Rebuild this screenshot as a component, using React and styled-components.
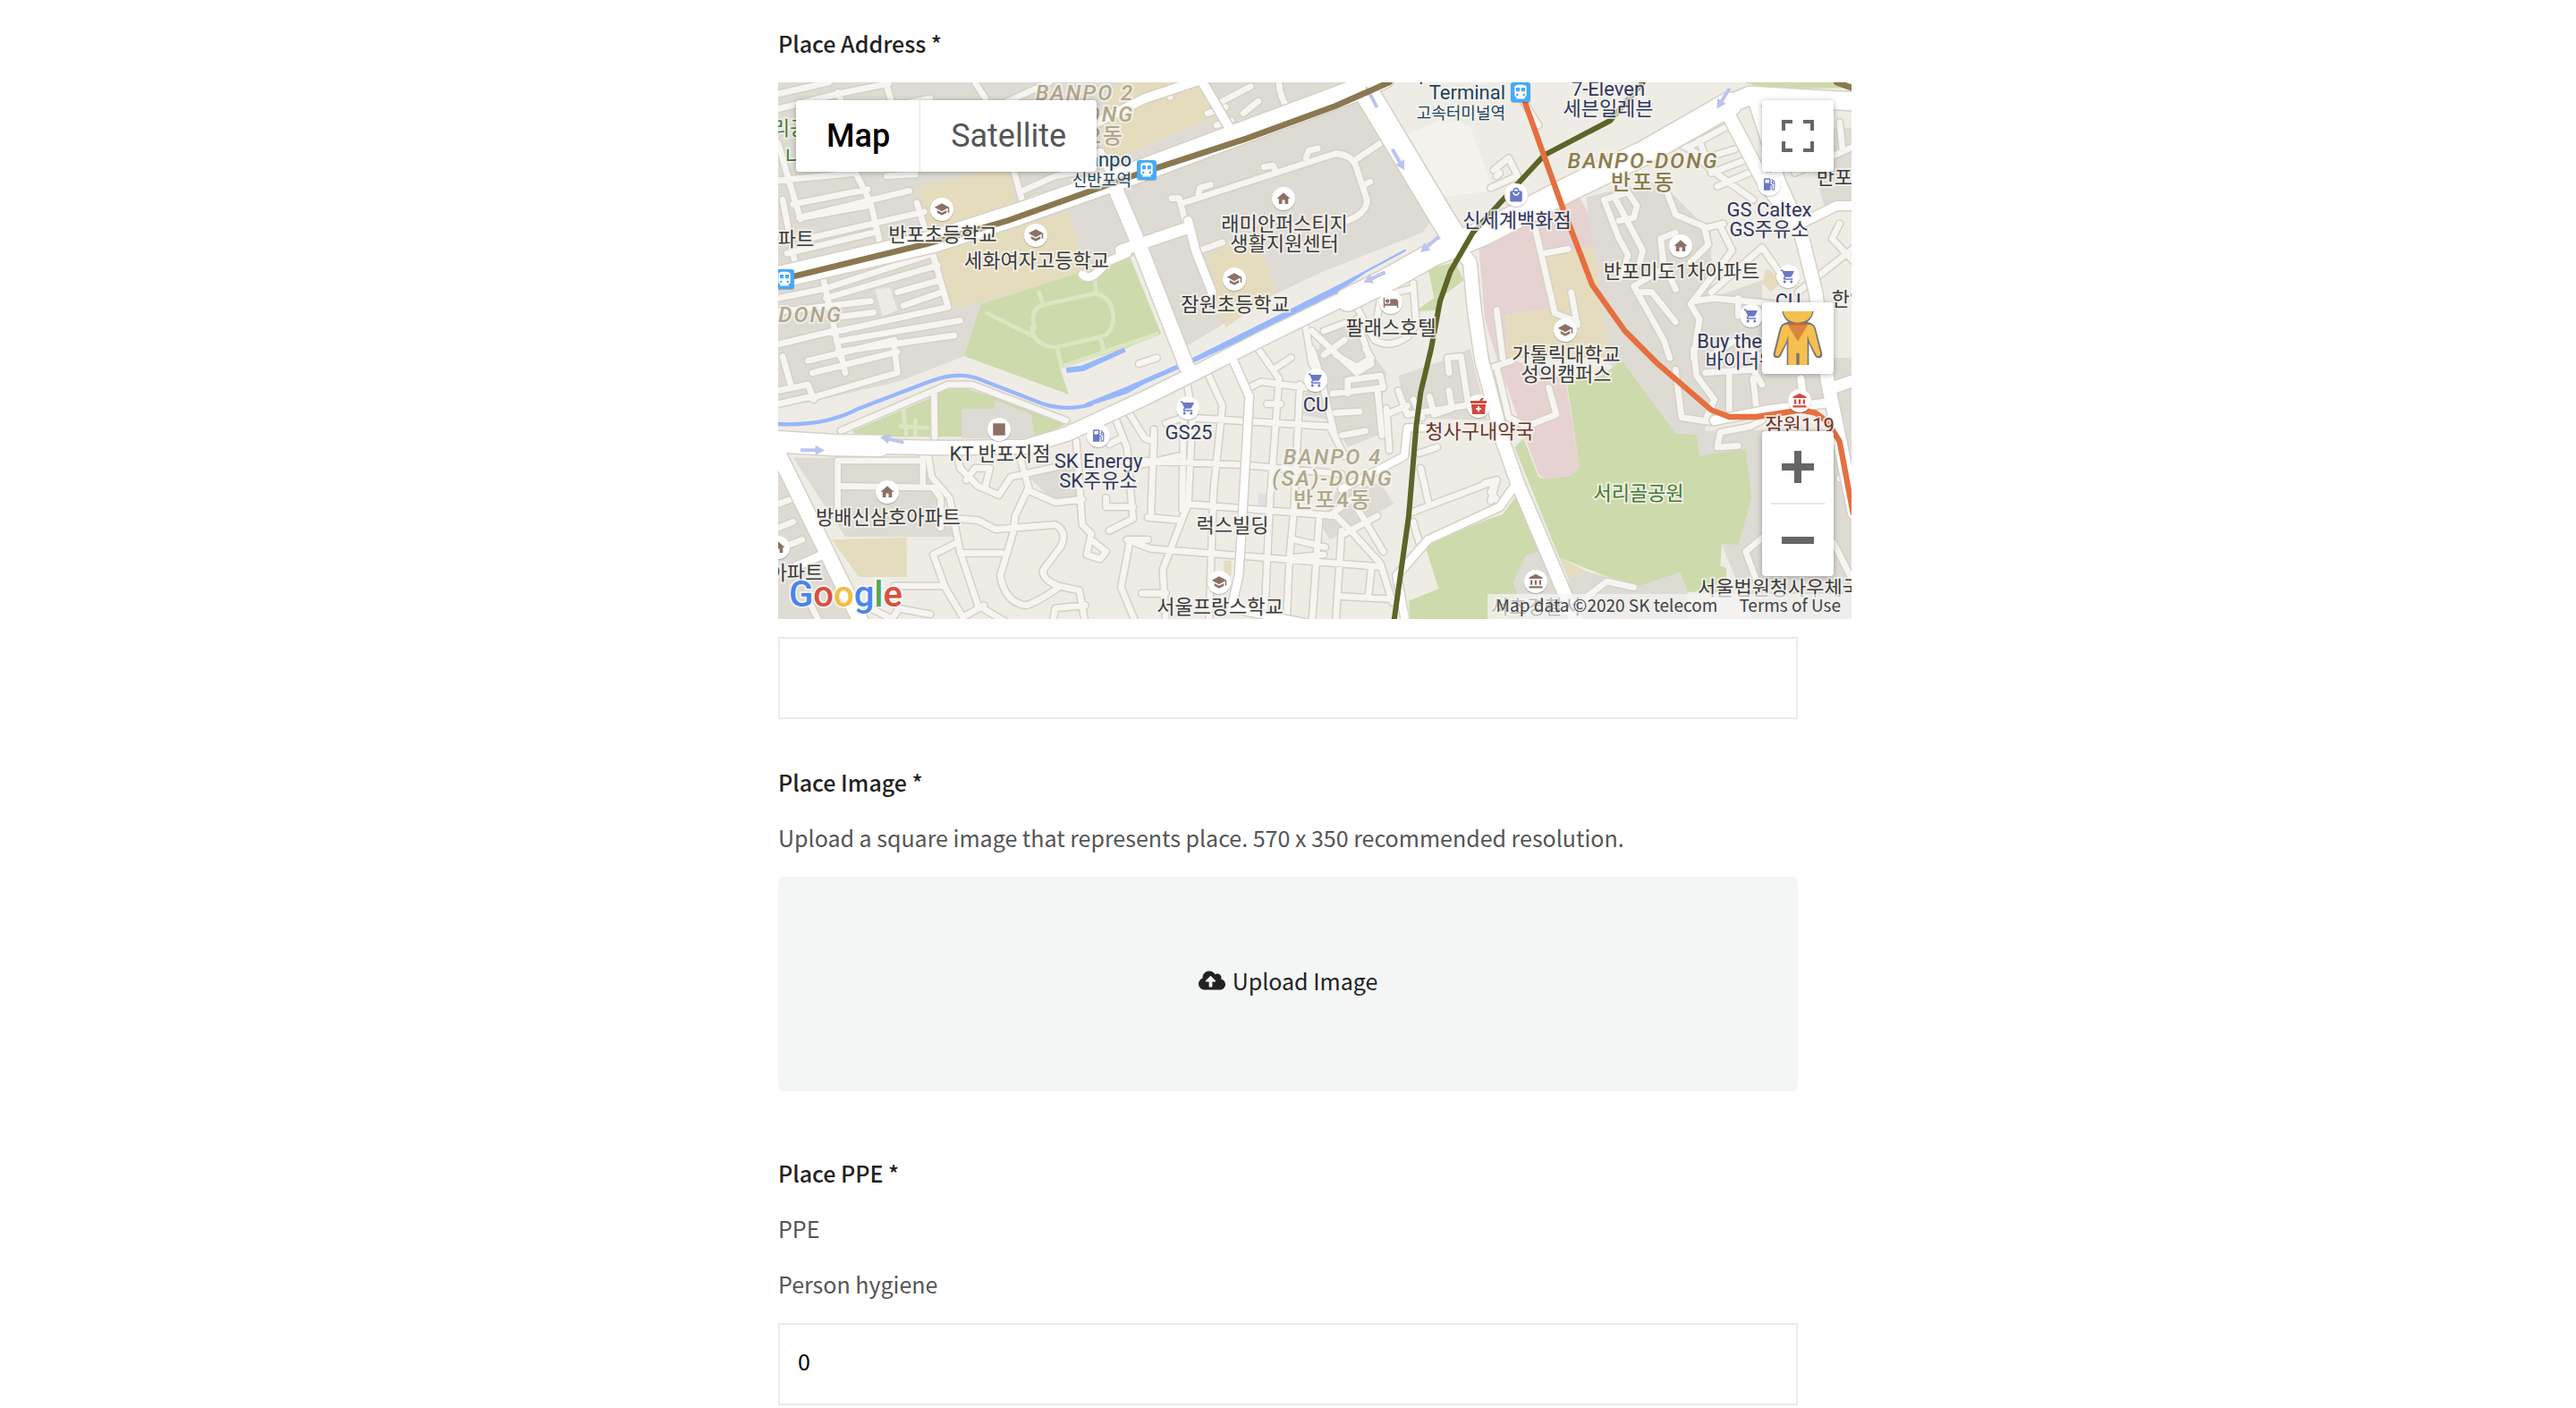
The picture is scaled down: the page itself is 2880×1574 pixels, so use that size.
import React, { useState } from "react";
import styled, { createGlobalStyle } from "styled-components";
import { FaCloudUploadAlt } from "react-icons/fa";
import {
  MdAccountBalance,
  MdDirectionsTransit,
  MdHome,
  MdHotel,
  MdLocalGasStation,
  MdLocalMall,
  MdSchool,
  MdShoppingCart,
  MdSquare,
} from "react-icons/md";

const GlobalStyle = createGlobalStyle`
  * {
    box-sizing: border-box;
  }

  body {
    margin: 0;
    background: #ffffff;
    color: #222222;
    font-family: "Noto Sans CJK KR", "Noto Sans", sans-serif;
  }
`;

const Form = styled.form`
  max-width: 1140px;
  margin: 0 auto;
  padding-top: 30px;
`;

const Field = styled.div`
  display: flex;
  flex-direction: column;
  margin-bottom: ${(props) => props.$gap || 52}px;
`;

const Label = styled.label`
  margin-bottom: 26px;
  font-size: 25px;
  font-weight: 500;
  line-height: 36px;
`;

const Description = styled.p`
  margin: 0 0 26px;
  color: #555555;
  font-size: 25px;
  line-height: 36px;
`;

const TextInput = styled.input`
  width: 100%;
  height: 92px;
  padding: 0 20px 8px;
  border: 2px solid #ebebeb;
  background: #ffffff;
  color: #000000;
  font-family: inherit;
  font-size: 25px;
`;

const UploadButton = styled.button`
  display: flex;
  align-items: center;
  justify-content: center;
  gap: 8px;
  width: 100%;
  height: 240px;
  padding: 0 0 8px;
  border: none;
  border-radius: 6px;
  background: #f4f6f6;
  color: #222222;
  font-family: inherit;
  font-size: 25px;
  cursor: pointer;

  svg {
    width: 30px;
    height: 24px;
  }
`;

const MapFrame = styled.div`
  position: relative;
  width: calc(100% + 60px);
  height: 600px;
  margin-bottom: 20px;
  overflow: hidden;
  background: #efece6;
  font-family: Roboto, "Noto Sans CJK KR", sans-serif;
`;

const MapDrawing = styled.svg`
  display: block;
  width: 100%;
  height: 100%;
  fill: none;
  stroke-linejoin: round;
  stroke-linecap: round;
`;

const Marker = styled.span`
  position: absolute;
  left: ${(props) => props.$x}px;
  top: ${(props) => props.$y}px;
  display: flex;
  align-items: center;
  justify-content: center;
  width: 26px;
  height: 26px;
  border-radius: 50%;
  background: #ffffff;
  box-shadow: 0 1px 1px rgba(0, 0, 0, 0.25);
  color: ${(props) => props.$color};
  font-size: 18px;
  transform: translate(-50%, -50%);
`;

const StationMarker = styled(Marker)`
  width: 22px;
  height: 22px;
  border-radius: 3px;
  background: #46aaf8;
  color: #ffffff;
  font-size: 20px;
`;

const PlaceName = styled.span`
  position: absolute;
  left: ${(props) => props.$x}px;
  top: ${(props) => props.$y}px;
  color: ${(props) => props.$color};
  font-size: 22px;
  line-height: 22px;
  text-align: center;
  white-space: pre;
  transform: translate(-50%, -50%);
  -webkit-text-stroke: 4px rgba(245, 243, 238, 0.8);
  paint-order: stroke fill;
`;

const DistrictName = styled(PlaceName)`
  font-size: 24px;
  font-weight: 500;
  line-height: 24px;
  letter-spacing: 2px;

  em {
    font-style: italic;
  }
`;

const StationName = styled(PlaceName)`
  text-align: right;
  transform: translate(-100%, -50%);

  small {
    font-size: 18px;
  }
`;

const MapTypes = styled.div`
  position: absolute;
  left: 20px;
  top: 20px;
  display: flex;
  border-radius: 4px;
  box-shadow: 0 1px 6px rgba(0, 0, 0, 0.3);
`;

const MapTypeButton = styled.button`
  height: 80px;
  padding: 0 34px;
  border: none;
  border-radius: ${(props) => (props.$divided ? "0 4px 4px 0" : "4px 0 0 4px")};
  background: #ffffff;
  box-shadow: ${(props) => (props.$divided ? "-1px 0 2px rgba(0, 0, 0, 0.12)" : "none")};
  color: ${(props) => (props.$active ? "#000000" : "#565656")};
  font-family: Roboto, sans-serif;
  font-size: 36px;
  font-weight: ${(props) => (props.$active ? 500 : 400)};
  cursor: pointer;
`;

const MapControls = styled.div`
  position: absolute;
  right: 20px;
  top: ${(props) => props.$top}px;
  display: flex;
  flex-direction: column;
  align-items: center;
  width: 80px;
  border-radius: 4px;
  background: #ffffff;
  box-shadow: 0 1px 6px rgba(0, 0, 0, 0.3);
`;

const ControlButton = styled.button`
  display: flex;
  align-items: center;
  justify-content: center;
  width: 80px;
  height: 80px;
  padding: 0;
  border: none;
  background: none;
  cursor: pointer;
`;

const ControlDivider = styled.div`
  width: 60px;
  height: 2px;
  background: #e6e6e6;
`;

const Logo = styled.a`
  position: absolute;
  left: 12px;
  bottom: 4px;
  font-size: 40px;
  font-weight: 500;
  line-height: 46px;
  text-decoration: none;
  -webkit-text-stroke: 4px rgba(255, 255, 255, 0.7);
  paint-order: stroke fill;
`;

const LogoLetter = styled.span`
  color: ${(props) => props.$color};
`;

const Attribution = styled.div`
  position: absolute;
  right: 0;
  bottom: 0;
  display: flex;
  gap: 24px;
  height: 28px;
  padding: 0 12px 0 10px;
  background: rgba(245, 245, 245, 0.7);
  color: #444444;
  font-family: "Noto Sans CJK KR", sans-serif;
  font-size: 19px;
  line-height: 24px;

  a {
    color: inherit;
    text-decoration: none;
  }
`;

const BLOCK = "#dedbd4";
const SAND = "#e5dcbe";
const GREEN = "#cddaab";
const PINK = "#e6d3d1";
const BROWN = "#8d7166";
const BLUE = "#6b78c4";
const NAVY = "#2f3560";
const DARK = "#3a3a3a";
const RED = "#cf4a3f";
const MAROON = "#6e332c";
const PARK_TEXT = "#3f7a30";
const DISTRICT = "#b0a78a";

// The map is stored as six tiles, each with its own origin
const tiles = [
  {
    x: -30,
    y: -36,
    areas: [
      [BLOCK, "M30 36H1300V610L1180 625L1070 690L655 955L430 1040L130 1110L30 1120Z"],
      [SAND, "M500 385L800 320L825 450L530 530Z"],
      [SAND, "M555 600L1005 470L1060 680L605 800Z"],
      [GREEN, "M710 780L1210 622L1315 880L1190 930L975 995L1005 1083L655 955Z"],
      ["#efece6", "M355 730L405 725L430 800L380 820Z"],
    ],
    paths: "M890 860Q870 790 930 780L1090 745Q1150 750 1155 830Q1150 880 1110 890L960 925Q890 920 880 860ZM730 810L880 885M905 740L920 785M1092 700L1097 745M1110 890L1120 930M965 925L980 990L1300 880",
    minor:
      "M30 75L200 36M30 125L230 75L400 40M390 36L410 100M230 70L245 110M690 36L725 90M790 105L940 36M540 90L440 110M30 240L60 345L105 495M45 430L90 660M100 490L470 400M290 340L340 440L375 590M30 365L290 340M80 445L330 395M110 490L330 450M130 560L370 505L520 470M495 440L545 600M60 610L350 540M395 350L490 345M180 690L240 960M30 760L180 730L550 610M545 600L600 790M190 760L565 650M430 740L570 700M450 785L580 740M30 805L340 770M215 825L350 808M210 875L600 790M30 915L215 870M225 905L640 835M230 940L620 885M45 955L75 1060M30 1070L130 1050L150 1100M240 945L255 1010M420 930L430 1010L140 1095M130 970L420 900M145 1010L430 940M30 1115L140 1090M820 330L850 440L900 420M850 400L960 350L1080 330",
    major: [
      [26, "M1050 680Q1080 710 1130 640L1200 610"],
      [72, "M30 690L550 570L830 480L1240 335L1950 70L2060 20"],
      [30, "M1100 170L1260 90L1440 30"],
      [26, "M1110 270L1140 330"],
    ],
  },
  {
    x: 1170,
    y: -36,
    areas: [
      [BLOCK, "M0 36H800L860 100L1030 490L990 540L660 670L490 750L200 920L60 700L0 500Z"],
      [SAND, "M-30 36H245L300 150L0 275L-70 290L-100 170Z"],
      [SAND, "M270 610L440 550L495 740L330 860Z"],
      [GREEN, "M1010 660L1100 640L1130 700L1050 760L1040 800L965 805L1030 760Z"],
      ["#f4f2ed", "M940 210L1060 160L1150 180L1230 400L1060 420Z"],
      [BLOCK, "M650 860L720 840L790 900L870 1010L640 1000Z"],
    ],
    minor:
      "M190 440L700 275Q750 280 765 310L805 430Q805 475 740 500M150 425L175 425L200 520M240 410L245 390L280 380M500 340L490 315L460 320M600 290L610 265L640 258M760 300L850 240M795 380L815 370M230 605L320 573M510 36Q510 80 540 125M300 110L415 50M390 140L440 100M300 180L350 165M270 140L330 120M130 60L145 85M770 790L830 900Q880 930 940 890L970 850L960 710M660 870L740 840M840 820L850 760L900 740L950 730M40 1320L170 1290M1250 340L1240 350M600 860L620 980L640 1010M620 870L770 1010L820 980L770 830M660 950L730 900",
    major: [
      [30, "M250 30L350 200"],
      [48, "M-40 390L40 580L200 990L220 1010"],
      [38, "M-20 600L200 525"],
      [28, "M205 500L230 600L285 740"],
      [70, "M-1190 1240L-980 1253L-830 1255"],
      [46, "M-830 1258L-600 1262L-340 1258L-200 1215L60 1095L240 1005L460 892L705 772"],
      [76, "M740 765L860 706L1030 611L1110 580"],
      [80, "M1080 590L1200 540L1490 390L1740 270L2020 110"],
      [60, "M2020 110L2090 80L2430 100"],
      [80, "M810 80L1050 480L1100 560"],
      [44, "M1080 550L1150 640L1165 800L1190 970L1215 1060L1260 1240L1310 1380L1510 1850"],
      [26, "M1310 1375L1250 1460L1010 1570L905 1690L935 1850"],
    ],
  },
  {
    x: 2370,
    y: -36,
    areas: [
      [BLOCK, "M340 420L560 370L640 420L760 540L760 760L930 700L930 960L1230 960V1840H900L640 1215L400 960Z"],
      [BLOCK, "M1070 190H1240V460H1140Z"],
      [PINK, "M-20 590L310 410L345 470L365 585L205 625L235 795L70 815L75 960L270 1030L318 1330L290 1355L200 1367L180 1350L100 1130L30 930L0 830Z"],
      [SAND, "M205 625L365 585L420 960L75 960L70 815L235 795Z"],
      [GREEN, "M870 36H1170L1240 55L950 58Z"],
      [SAND, "M930 710L945 660L1000 700L960 740Z"],
    ],
    minor:
      "M400 430L480 405L510 450L500 490L450 500M400 430L450 560L480 615L460 690M440 430L530 600L520 640M610 400L640 480L735 520L750 580L690 640M740 525L800 510M590 560L600 660L500 720L600 900L620 960M640 730L600 640L590 560L640 540M510 740L560 740L640 840M700 770L770 760L980 780M790 520L830 600L690 780L720 830L700 960M760 740L930 590L1000 690M1240 590L1050 740M1190 510L1165 560L1240 640M680 250L760 330L900 430M690 250L820 180M740 290L840 260M760 340L865 300M780 385L885 340M170 530L235 810L310 840M200 610L280 595M290 740L310 850M40 800L60 960M650 240L740 290L720 230M1040 340L1240 250M1190 170L1200 260M30 330L80 290L110 350L20 390M180 180L130 100M750 960L840 900L930 960M850 760L850 820",
    major: [
      [44, "M820 150L930 360L1060 540L1110 740L1150 1040L1240 1480"],
      [36, "M900 90L990 370L1050 500"],
      [30, "M1240 450L1180 450L1060 510"],
    ],
  },
  {
    x: -30,
    y: 894,
    areas: [
      [BLOCK, "M80 365H540L620 630H255Z"],
      [BLOCK, "M30 400L290 906H30Z"],
      [GREEN, "M280 275L540 165L570 140L650 130L1015 245L900 295H290Z"],
      [BLOCK, "M645 200H755V170L880 220L890 300H645Z"],
      [BLOCK, "M860 420L1030 390L1050 505L960 515Z"],
      [SAND, "M210 640L460 632L462 765H300Z"],
    ],
    paths: "M440 260L530 265M450 210L460 290M490 240V290",
    minor:
      "M240 275L600 120H680L995 240M553 150L555 310M230 560V375H510M230 460L550 465L575 500V600M515 350V460M530 340L545 430L605 500L640 680L700 860L800 920M630 340L640 400L700 460L770 490L810 430L990 390M660 440L690 400H740L725 460M840 360L870 465L825 560L820 610L775 760Q790 850 860 860Q900 850 970 800M640 570L700 575L760 605L960 590Q1000 610 980 660L920 740Q910 770 970 795L1040 810L1060 920M870 475L960 515L1050 505M1030 310L1050 590L1080 620L1065 690L1110 705L1130 680L1080 640M640 685H780M620 655L550 690L590 800L650 900L720 860M420 795H580M950 920L960 870L1060 860M1160 230L1200 330L1220 570L1140 610M1130 500V530H1220M1270 640H1210L1180 800L1230 920M1240 50L1300 30M1140 320L1180 300M30 520L85 500M30 600L80 580M60 660L110 640M430 870L540 890M430 880L400 920M140 860L170 920M340 870L400 900",
    major: [
      [50, "M30 350L310 920"],
      [28, "M90 730L180 690"],
    ],
  },
  {
    x: 1170,
    y: 894,
    areas: [
      [BLOCK, "M640 0H800L870 80L840 290L740 330L690 240L580 220L600 140Z"],
      [BLOCK, "M910 90L1060 40L1150 0L1210 240L940 230Z"],
      [BLOCK, "M700 480L850 450L895 520L730 610L680 640L650 590Z"],
      [SAND, "M325 710H350V760H325Z"],
      ["#dfe0e2", "M440 485H475V530H440Z"],
    ],
    minor:
      "M270 80L320 190L290 480L275 920M200 110L220 220L205 520L120 740L130 920M190 240L185 540M440 0L510 100L480 500L460 920M580 120L560 540L545 700L535 920M10 220L60 300L90 310L80 560M90 270V320M130 250L190 230L680 260L730 360M40 375L400 390L720 420M200 520L700 560L760 620L850 720L890 850M70 565L180 575M0 640L80 670L840 730M560 640L665 665M560 700L660 690M645 570L620 920M720 610L700 920M410 130L450 110L600 130M515 185H470M690 150L860 130L850 90L740 105V150M640 60L700 300M700 215L780 210M720 290L800 275M840 140L855 290M870 200L880 340M870 220L940 190M680 560L760 500M770 530L860 680M730 620L840 560M950 550L1240 440L1220 480L1250 520M980 350L1040 330M985 400L1010 510M910 140L940 220L1200 180M1015 160L1030 220L1090 200L1080 140M1080 80L1075 30L1120 25L1145 190M960 170L990 230M50 820H130M720 830L900 840M820 730L810 830M960 580L980 650M620 0L640 60M490 70L550 30M700 20L770 60L820 30L800 0",
    major: [
      [26, "M355 35L410 160L385 600L375 760L350 870L600 920"],
      [24, "M720 470L930 360L940 265H1010"],
    ],
  },
  {
    x: 2370,
    y: 894,
    areas: [
      [GREEN, "M275 110L390 90L460 40L640 285L710 288L720 360L875 335L895 500L850 658L795 652L790 728L810 735V815L680 815L655 750L520 795L400 760L250 700L100 330L130 300L180 430L200 437L290 425L318 400Z"],
      [GREEN, "M-200 660L0 575L60 555L105 495L290 906H-250L-255 845L-155 805Z"],
      [BLOCK, "M95 780L140 690L180 680L280 906H130Z"],
      [SAND, "M250 700L340 745L280 770Z"],
      [BLOCK, "M280 770L340 745L520 795L655 750L680 815V906H300Z"],
      ["#efece6", "M740 260L900 220L1150 190V270L740 275Z"],
    ],
    minor:
      "M40 60L80 230L140 260L240 220L215 130M0 70L90 40M640 70L660 230L760 245M820 80V230M700 0L710 90L770 170L740 240M740 80L900 70L930 120M900 100L910 190M850 325L780 330L790 280L890 260L930 240M330 840L410 780L500 800M0 450L40 440L20 510M960 610L875 680L920 800M1170 650L1240 790M1190 435H1240M300 860L350 840",
    major: [
      [30, "M770 240L950 205L1160 180"],
      [24, "M1060 100L1070 180"],
      [38, "M1170 130L1240 105"],
    ],
  },
];

const arrows = [
  [1990, 49, -118],
  [2080, 259, 60],
  [2185, 544, 140],
  [2000, 654, 155],
  [3170, 54, 122],
  [115, 1234, 0],
  [382, 1199, 193],
];

const tilePosition = (tile) => `translate(${tile.x} ${tile.y})`;

const CityMap = () => (
  <MapDrawing viewBox="0 0 3600 1800" preserveAspectRatio="xMinYMin slice" aria-hidden="true">
    {tiles.map((tile, i) => (
      <g key={i} transform={tilePosition(tile)}>
        {tile.areas.map(([color, d]) => (
          <path key={d} d={d} fill={color} />
        ))}
      </g>
    ))}
    {tiles.map((tile, i) => (
      <path key={i} transform={tilePosition(tile)} d={tile.paths} stroke="#dde6c3" strokeWidth="14" />
    ))}

    {/* Road outlines first so that the crossings stay open */}
    {tiles.map((tile, i) => (
      <path key={i} transform={tilePosition(tile)} d={tile.minor} stroke="#d6d1c6" strokeWidth="29" />
    ))}
    {tiles.map((tile, i) => (
      <path key={i} transform={tilePosition(tile)} d={tile.minor} stroke="#f7f5f2" strokeWidth="20" />
    ))}

    {/* Water */}
    <path d="M0 1146Q160 1154 270 1094L510 1003Q600 968 670 994L890 1079Q970 1104 1050 1080" stroke="#97b7fb" strokeWidth="13" />
    <path d="M965 957L1018 950L1160 890L1166 904L1025 968L968 975Z" fill="#97b7fb" />
    <path
      d="M1030 1076L1170 1020L1230 994L1390 924L1710 764L1880 679L2105 559V566L1970 639L1870 709L1730 784L1560 864L1390 941L1230 1011L1170 1044L1030 1090Z"
      fill="#97b7fb"
    />

    {tiles.map((tile, i) => (
      <g key={i} transform={tilePosition(tile)} stroke="#d6d1c6">
        {tile.major.map(([width, d]) => (
          <path key={d} d={d} strokeWidth={width + 9} />
        ))}
      </g>
    ))}
    {tiles.map((tile, i) => (
      <g key={i} transform={tilePosition(tile)} stroke="#ffffff">
        {tile.major.map(([width, d]) => (
          <path key={d} d={d} strokeWidth={width} />
        ))}
      </g>
    ))}
    {arrows.map(([x, y, angle]) => (
      <path
        key={`${x}-${y}`}
        d="M-40-6H10V-17L41 0L10 17V6H-40Z"
        fill="#bcc4ee"
        transform={`translate(${x} ${y}) rotate(${angle})`}
      />
    ))}

    {/* Subway lines */}
    <path d="M30 656L510 539L770 464L1200 310L1570 189L1870 79L2050 0M3550 0L3610 22" stroke="#8b7850" strokeWidth="20" />
    <path d="M2900 0L2790 129L2570 244L2445 379L2330 504L2255 634L2220 734L2190 894L2155 1040L2140 1154L2115 1454L2065 1810" stroke="#5e6428" strokeWidth="18" />
    <path d="M2500 54L2625 404L2730 679L2840 834L2950 944L3130 1099L3190 1122H3280L3430 1099L3480 1109L3520 1139L3560 1204L3605 1444" stroke="#e66f3f" strokeWidth="19" />
  </MapDrawing>
);

const PharmacyIcon = () => (
  <svg width="18" height="18" viewBox="0 0 18 18" fill="currentColor">
    <path d="M0 3H10L12 0H15L13 3H18V6H0ZM1 7H17L16 18H2ZM8 9V11H6V13H8V15H10V13H12V11H10V9Z" fillRule="evenodd" />
  </svg>
);

const places = [
  { name: "반포초등학교", x: 184, y: 171, icon: MdSchool, ix: 183, iy: 142 },
  { name: "세화여자고등학교", x: 289, y: 200, icon: MdSchool, ix: 288, iy: 171 },
  { name: "파트", x: 20, y: 176 },
  { name: "리공", x: 13, y: 52, color: PARK_TEXT },
  { name: "나", x: 18, y: 84, color: PARK_TEXT },
  { name: "래미안퍼스티지\n생활지원센터", x: 566, y: 170, icon: MdHome, ix: 565, iy: 130 },
  { name: "잠원초등학교", x: 511, y: 249, icon: MdSchool, ix: 510, iy: 220 },
  { name: "팔래스호텔", x: 685, y: 275, icon: MdHotel, ix: 685, iy: 246 },
  { name: "신세계백화점", x: 826, y: 155, color: NAVY, icon: MdLocalMall, iconColor: BLUE, ix: 825, iy: 126 },
  { name: "7-Eleven\n세븐일레븐", x: 928, y: 19, color: NAVY },
  { name: "GS Caltex\nGS주유소", x: 1108, y: 154, color: NAVY, icon: MdLocalGasStation, iconColor: BLUE, ix: 1108, iy: 114 },
  { name: "반포", x: 1181, y: 107 },
  { name: "반포미도1차아파트", x: 1010, y: 212, icon: MdHome, ix: 1009, iy: 183 },
  { name: "CU", x: 1129, y: 245, color: NAVY, icon: MdShoppingCart, iconColor: BLUE, ix: 1129, iy: 217 },
  { name: "한양", x: 1198, y: 243 },
  { name: "Buy the Way\n바이더웨이", x: 1087, y: 301, color: NAVY, icon: MdShoppingCart, iconColor: BLUE, ix: 1088, iy: 261 },
  { name: "가톨릭대학교\n성의캠퍼스", x: 881, y: 316, icon: MdSchool, ix: 880, iy: 277 },
  { name: "잠원119", x: 1142, y: 384, color: MAROON, icon: MdAccountBalance, iconColor: RED, ix: 1142, iy: 356 },
  { name: "청사구내약국", x: 784, y: 391, color: MAROON, icon: PharmacyIcon, iconColor: RED, ix: 783, iy: 362 },
  { name: "서리골공원", x: 962, y: 460, color: PARK_TEXT },
  { name: "CU", x: 601, y: 361, color: NAVY, icon: MdShoppingCart, iconColor: BLUE, ix: 601, iy: 333 },
  { name: "GS25", x: 459, y: 392, color: NAVY, icon: MdShoppingCart, iconColor: BLUE, ix: 458, iy: 364 },
  { name: "KT 반포지점", x: 248, y: 416, icon: MdSquare, ix: 247, iy: 388 },
  { name: "SK Energy\nSK주유소", x: 358, y: 435, color: NAVY, icon: MdLocalGasStation, iconColor: BLUE, ix: 358, iy: 395 },
  { name: "방배신삼호아파트", x: 123, y: 487, icon: MdHome, ix: 122, iy: 458 },
  { name: "아파트", x: 20, y: 549, icon: MdHome, ix: 0, iy: 520 },
  { name: "럭스빌딩", x: 508, y: 496 },
  { name: "서울프랑스학교", x: 494, y: 587, icon: MdSchool, ix: 493, iy: 559 },
  { name: "서초경찰서", x: 847, y: 587, icon: MdAccountBalance, ix: 847, iy: 558 },
  { name: "서울법원청사우체국", x: 1119, y: 566 },
];

const districts = [
  { latin: "BANPO 2\n(I)-DONG", korean: "반포2동", x: 343, y: 36 },
  { latin: "DONG", x: 36, y: 260 },
  { latin: "BANPO-DONG", korean: "반포동", x: 967, y: 100, color: "#8c7d4e" },
  { latin: "BANPO 4\n(SA)-DONG", korean: "반포4동", x: 620, y: 443 },
];

const stations = [
  { latin: "Sinbanpo", korean: "신반포역", x: 395, y: 98, ix: 412, iy: 98 },
  { latin: "Express Bus\nTerminal", korean: "고속터미널역", x: 813, y: 12, ix: 830, iy: 11 },
];

const googleLetters = [
  ["G", "#4a86ee"],
  ["o", "#db4f40"],
  ["o", "#f4bd41"],
  ["g", "#4a86ee"],
  ["l", "#54a757"],
  ["e", "#db4f40"],
];

const PlaceMap = () => {
  const [mapType, setMapType] = useState("map");

  return (
    <MapFrame>
      <CityMap />

      {places.map(({ icon: Icon, ...place }) => (
        <React.Fragment key={`${place.x}-${place.y}`}>
          {Icon && (
            <Marker $x={place.ix} $y={place.iy} $color={place.iconColor || BROWN}>
              <Icon />
            </Marker>
          )}
          <PlaceName $x={place.x} $y={place.y} $color={place.color || DARK}>
            {place.name}
          </PlaceName>
        </React.Fragment>
      ))}
      {districts.map((district) => (
        <DistrictName
          key={district.latin}
          $x={district.x}
          $y={district.y}
          $color={district.color || DISTRICT}
        >
          <em>{district.latin}</em>
          {district.korean && `\n${district.korean}`}
        </DistrictName>
      ))}
      {stations.map((station) => (
        <React.Fragment key={station.latin}>
          <StationMarker $x={station.ix} $y={station.iy}>
            <MdDirectionsTransit />
          </StationMarker>
          <StationName $x={station.x} $y={station.y} $color="#1a4460">
            {station.latin}
            {"\n"}
            <small>{station.korean}</small>
          </StationName>
        </React.Fragment>
      ))}
      <StationMarker $x={7} $y={220}>
        <MdDirectionsTransit />
      </StationMarker>

      <MapTypes>
        <MapTypeButton type="button" $active={mapType === "map"} onClick={() => setMapType("map")}>
          Map
        </MapTypeButton>
        <MapTypeButton
          type="button"
          $divided
          $active={mapType === "satellite"}
          onClick={() => setMapType("satellite")}
        >
          Satellite
        </MapTypeButton>
      </MapTypes>

      <MapControls $top={20}>
        <ControlButton type="button" aria-label="Toggle fullscreen view">
          <svg width="36" height="36" viewBox="0 0 36 36" fill="#666666">
            <path d="M0 0H12V4H4V12H0ZM24 0H36V12H32V4H24ZM0 24H4V32H12V36H0ZM32 24H36V36H24V32H32Z" />
          </svg>
        </ControlButton>
      </MapControls>
      <MapControls $top={246}>
        <ControlButton type="button" aria-label="Street View">
          <svg width="56" height="60" viewBox="0 0 168 180">
            <path
              d="M31 0Q36 25 52 35L38 40Q25 46 21 65L2 142Q0 154 12 157Q24 158 28 148L47 108V180H121V108L140 148Q145 158 157 157Q168 154 166 142L146 65Q142 46 129 40L116 35Q132 25 137 0Z"
              fill="#777777"
            />
            <path
              d="M35 0Q42 36 84 38Q126 36 133 0ZM44 44Q31 46 27 65L8 143Q9 151 20 150L44 105L52 80V180H79V140H89V180H116V80L124 105L148 150Q159 151 160 143L141 65Q137 46 124 44Z"
              fill="#f6bf4f"
            />
            <path d="M50 44Q84 38 118 44L84 101Z" fill="#d9853f" />
            <path d="M52 42Q84 38 116 42L110 47H58Z" fill="#cf6a30" />
          </svg>
        </ControlButton>
      </MapControls>
      <MapControls $top={390}>
        <ControlButton type="button" aria-label="Zoom in">
          <svg width="36" height="36" viewBox="0 0 36 36" fill="#666666">
            <path d="M14 0H22V14H36V22H22V36H14V22H0V14H14Z" />
          </svg>
        </ControlButton>
        <ControlDivider />
        <ControlButton type="button" aria-label="Zoom out">
          <svg width="36" height="36" viewBox="0 0 36 36" fill="#666666">
            <path d="M0 14H36V22H0Z" />
          </svg>
        </ControlButton>
      </MapControls>

      <Attribution>
        <span>Map data ©2020 SK telecom</span>
        <a href="#terms">Terms of Use</a>
      </Attribution>
      <Logo href="#google">
        {googleLetters.map(([letter, color], i) => (
          <LogoLetter key={i} $color={color}>
            {letter}
          </LogoLetter>
        ))}
      </Logo>
    </MapFrame>
  );
};

const App = () => {
  const [address, setAddress] = useState("");
  const [hygiene, setHygiene] = useState("0");

  return (
    <>
      <GlobalStyle />
      <Form>
        <Field>
          <Label htmlFor="place-address">Place Address *</Label>
          <PlaceMap />
          <TextInput
            id="place-address"
            type="text"
            value={address}
            onChange={(e) => setAddress(e.target.value)}
          />
        </Field>

        <Field $gap={73}>
          <Label htmlFor="place-image">Place Image *</Label>
          <Description>
            Upload a square image that represents place. 570 x 350 recommended resolution.
          </Description>
          <UploadButton id="place-image" type="button">
            <FaCloudUploadAlt />
            Upload Image
          </UploadButton>
        </Field>

        <Field $gap={4}>
          <Label htmlFor="place-ppe">Place PPE *</Label>
          <Description>PPE</Description>
          <Description>Person hygiene</Description>
          <TextInput
            id="place-ppe"
            type="text"
            value={hygiene}
            onChange={(e) => setHygiene(e.target.value)}
          />
        </Field>
      </Form>
    </>
  );
};

export default App;
